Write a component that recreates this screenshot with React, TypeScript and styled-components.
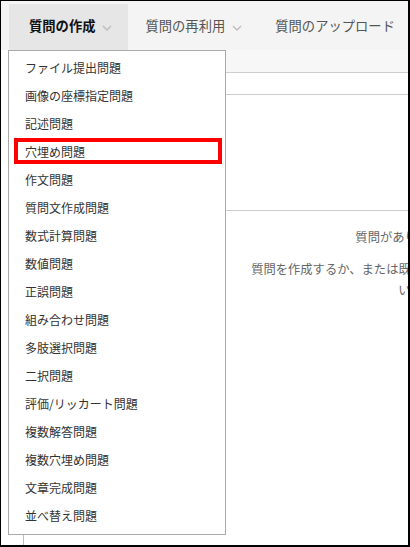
import styled, { createGlobalStyle } from 'styled-components';

const GlobalStyle = createGlobalStyle`
  html, body {
    margin: 0;
    padding: 0;
    background: #fff;
  }
  body {
    font-family: "Noto Sans CJK JP", "Noto Sans", sans-serif;
  }
`;

const Frame = styled.div`
  box-sizing: border-box;
  width: 410px;
  height: 547px;
  border: 1px solid #000;
  border-right-width: 2px;
  border-bottom-width: 2px;
  overflow: hidden;
  background: #fff;
  display: flex;
  flex-direction: column;
`;

const NavBar = styled.nav`
  flex: none;
  display: flex;
  height: 49px;
  box-sizing: border-box;
  padding: 3px 0 0 8px;
  background: #f4f4f4;
  white-space: nowrap;
`;

const Tab = styled.div<{ $active?: boolean }>`
  display: flex;
  align-items: center;
  gap: 7px;
  padding: 0 16px 0 ${(p) => (p.$active ? '20px' : '17px')};
  background: ${(p) => (p.$active ? '#e6e6e6' : 'transparent')};
  color: ${(p) => (p.$active ? '#111' : '#555')};
  font-size: 13.3px;
  font-weight: ${(p) => (p.$active ? 700 : 400)};
  padding-bottom: 3px;
`;

const Chevron = styled.svg`
  width: 10px;
  height: 6px;
  margin-top: 5px;
`;

const Body = styled.div`
  position: relative;
  flex: 1;
`;

const Panel = styled.div`
  box-sizing: border-box;
  margin-left: 22px;
  width: 774px;
  height: 100%;
  border-left: 1px solid #bdbdbd;
  display: flex;
  flex-direction: column;
`;

const Row = styled.div<{ $h: number; $bg?: string }>`
  flex: none;
  height: ${(p) => p.$h}px;
  background: ${(p) => p.$bg || '#fff'};
  border-bottom: 1px solid #cdcdcd;
`;

const Empty = styled.div`
  padding-top: 16px;
  text-align: center;
  color: #666;
  font-size: 12.3px;
  line-height: 21px;

  p {
    margin: 0 0 11px;
  }
`;

const Menu = styled.ul`
  position: absolute;
  top: 0;
  left: 7px;
  box-sizing: border-box;
  width: 218px;
  margin: 0;
  padding: 3px 0 4px;
  list-style: none;
  background: #fff;
  border: 1px solid #aaa;
`;

const Item = styled.li<{ $marked?: boolean }>`
  position: relative;
  height: 28px;
  line-height: 28px;
  padding-left: 16px;
  font-size: 12px;
  color: #333;
  white-space: nowrap;

  ${(p) =>
    p.$marked &&
    `
    &::after {
      content: '';
      position: absolute;
      left: 5px;
      right: 3px;
      top: 0;
      height: 26px;
      box-sizing: border-box;
      border: 4px solid #ff0000;
    }
  `}
`;

const items = [
  'ファイル提出問題',
  '画像の座標指定問題',
  '記述問題',
  '穴埋め問題',
  '作文問題',
  '質問文作成問題',
  '数式計算問題',
  '数値問題',
  '正誤問題',
  '組み合わせ問題',
  '多肢選択問題',
  '二択問題',
  '評価/リッカート問題',
  '複数解答問題',
  '複数穴埋め問題',
  '文章完成問題',
  '並べ替え問題',
];

const Down = () => (
  <Chevron viewBox="0 0 10 6">
    <polyline points="1,1 5,5 9,1" fill="none" stroke="#bbb" strokeWidth="1.3" />
  </Chevron>
);

const App = () => {
  return (
    <>
      <GlobalStyle />
      <Frame>
        <NavBar>
          <Tab $active>
            質問の作成
            <Down />
          </Tab>
          <Tab>
            質問の再利用
            <Down />
          </Tab>
          <Tab>質問のアップロード</Tab>
        </NavBar>
        <Body>
          <Panel>
            <Row $h={22} $bg="#f7f7f7" />
            <Row $h={21} />
            <Row $h={115} />
            <Empty>
              <p>質問がありません。</p>
              <p>
                質問を作成するか、または既存の質問を再利用してくださ
                <br />
                い。
              </p>
            </Empty>
          </Panel>
          <Menu>
            {items.map((label) => (
              <Item key={label} $marked={label === '穴埋め問題'}>
                {label}
              </Item>
            ))}
          </Menu>
        </Body>
      </Frame>
    </>
  );
};

export default App;
